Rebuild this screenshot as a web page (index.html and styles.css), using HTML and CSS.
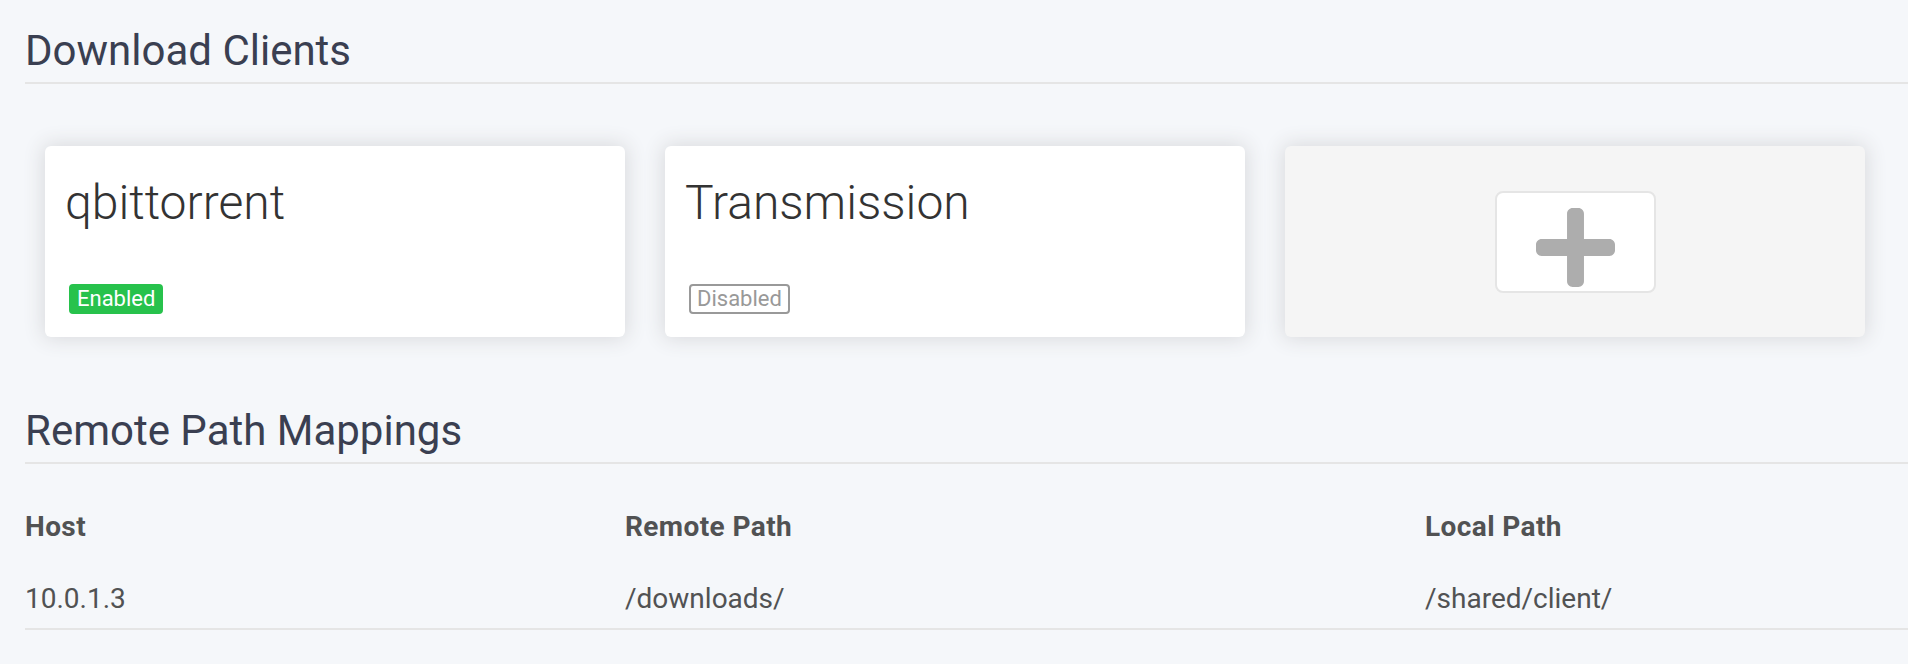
FILE: index.html
```html
<!DOCTYPE html>
<html lang="en">
<head>
<meta charset="utf-8">
<title>Download Clients</title>
<link rel="stylesheet" href="styles.css">
</head>
<body>
<div class="page">
  <section class="fieldset fieldset-clients">
    <h2 class="legend">Download Clients</h2>
    <div class="clients">
      <div class="card">
        <div class="name">qbittorrent</div>
        <div class="labels"><span class="label label-success">Enabled</span></div>
      </div>
      <div class="card">
        <div class="name">Transmission</div>
        <div class="labels"><span class="label label-disabled">Disabled</span></div>
      </div>
      <div class="card card-add">
        <div class="add-box">
          <svg class="plus" viewBox="0 32 448 448" width="79" height="79" aria-hidden="true"><path d="M416 208H272V64c0-17.67-14.33-32-32-32h-32c-17.67 0-32 14.33-32 32v144H32c-17.67 0-32 14.33-32 32v32c0 17.670 14.33 32 32 32h144v144c0 17.67 14.33 32 32 32h32c17.67 0 32-14.33 32-32V304h144c17.67 0 32-14.33 32-32v-32c0-17.670-14.33-32-32-32z"/></svg>
        </div>
      </div>
    </div>
  </section>
  <section class="fieldset">
    <h2 class="legend">Remote Path Mappings</h2>
    <table class="mappings">
      <colgroup>
        <col class="col-host">
        <col class="col-remote">
        <col class="col-local">
      </colgroup>
      <thead>
        <tr><th>Host</th><th>Remote Path</th><th>Local Path</th></tr>
      </thead>
      <tbody>
        <tr><td>10.0.1.3</td><td>/downloads/</td><td>/shared/client/</td></tr>
      </tbody>
    </table>
  </section>
</div>
</body>
</html>
```
FILE: styles.css
```css
html, body {
  margin: 0;
  padding: 0;
}

body {
  background: #f5f7fa;
  font-family: Roboto, "Liberation Sans", sans-serif;
  color: #515253;
  overflow: hidden;
}

.page {
  padding: 20px 0 0 25px;
  width: 1883px;
}

.fieldset {
  margin: 0;
}

.fieldset-clients {
  margin-bottom: 43px;
}

.legend {
  margin: 0 0 42px;
  padding: 0;
  font-size: 42px;
  font-weight: 400;
  line-height: 62px;
  color: #3a3f51;
  border-bottom: 2px solid #e5e5e5;
}

.clients {
  display: flex;
  gap: 40px;
  padding: 20px 0 20px 20px;
}

.card {
  flex: 0 0 auto;
  width: 580px;
  height: 191px;
  box-sizing: border-box;
  padding: 20px;
  background: #fff;
  border-radius: 6px;
  box-shadow: 0 0 20px 2px #d9dadd;
  display: flex;
  flex-direction: column;
}

.name {
  font-size: 48px;
  font-weight: 300;
  line-height: 74px;
  color: #333;
  margin-bottom: 44px;
  white-space: nowrap;
}

.labels {
  display: flex;
}

.label {
  display: inline-block;
  margin: 0 4px;
  padding: 0 6px;
  border: 2px solid;
  border-radius: 4px;
  font-size: 22px;
  line-height: 26px;
}

.label-success {
  background: #27c24c;
  border-color: #27c24c;
  color: #fff;
}

.label-disabled {
  background: #fff;
  border-color: #999;
  color: #999;
}

.card-add {
  background: #f5f5f5;
  align-items: center;
  justify-content: center;
}

.add-box {
  width: 161px;
  height: 102px;
  box-sizing: border-box;
  border: 2px solid #e5e5e5;
  border-radius: 8px;
  background: #fff;
  display: flex;
  justify-content: center;
  align-items: flex-start;
  padding-top: 15px;
}

.plus {
  display: block;
  fill: #adadad;
}

.mappings {
  width: 1883px;
  border-collapse: collapse;
  table-layout: fixed;
}

.col-host { width: 600px; }
.col-remote { width: 800px; }

.mappings th {
  text-align: left;
  font-size: 28px;
  font-weight: 700;
  letter-spacing: 0.4px;
  line-height: 42.8px;
  padding: 0 0 22px;
  color: #515253;
}

.mappings td {
  font-size: 28px;
  line-height: 42.8px;
  padding: 7px 0;
  color: #515253;
  border-bottom: 2px solid #e5e5e5;
  white-space: nowrap;
}
```
